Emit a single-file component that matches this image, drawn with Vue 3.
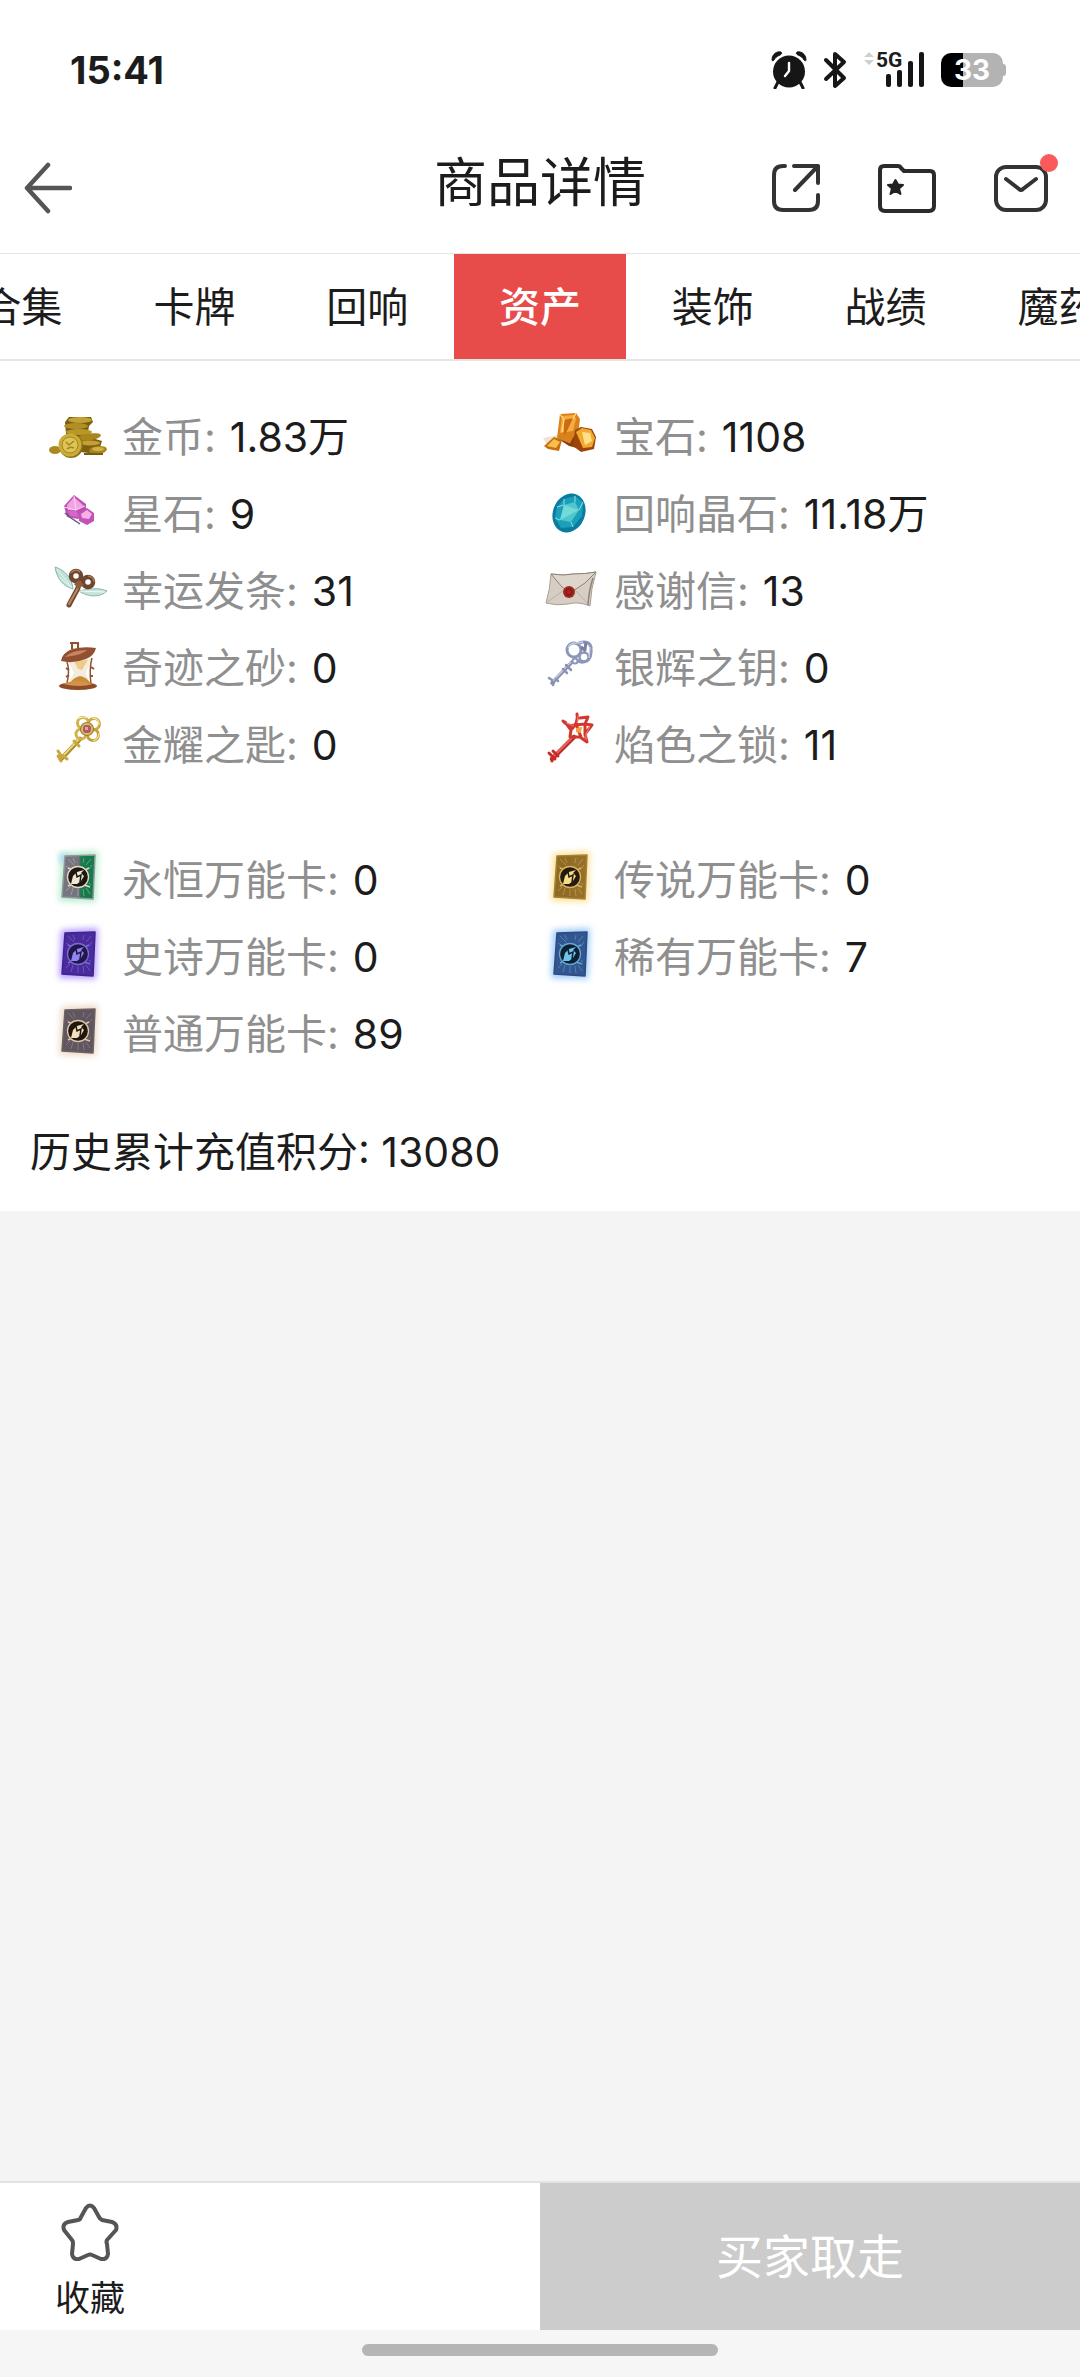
<template>
  <div class="page">
    <div class="status-bar">
      <span class="status-time">15:41</span>
      <div class="status-icons">
        <svg class="icon-alarm" viewBox="0 0 36 38" width="36" height="38">
          <path d="M7 31 L4 37 M29 31 L32 37" stroke="#161616" stroke-width="3" stroke-linecap="round" fill="none" />
          <circle cx="18" cy="20.500" r="16" fill="#161616" />
          <path d="M1 9 C1 3 6 0 10 1 C11 2 11 3 9 4 C6 5 4 7 3 9 C2 10 1 10 1 9 Z M35 9 C35 3 30 0 26 1 C25 2 25 3 27 4 C30 5 32 7 33 9 C34 10 35 10 35 9 Z" fill="#161616" stroke="#161616" stroke-width="1" />
          <path d="M18 12 V20 L14 25" stroke="#fff" stroke-width="2.400" stroke-linecap="round" stroke-linejoin="round" fill="none" />
        </svg>
        <svg class="icon-bluetooth" viewBox="0 0 24 38" width="24" height="38">
          <path d="M3 9 L21 27 L12 35 V3 L21 11 L3 28" stroke="#161616" stroke-width="4" stroke-linejoin="round" stroke-linecap="round" fill="none" />
        </svg>
        <div class="signal">
          <svg viewBox="0 0 62 38" width="62" height="38">
            <path d="M1 6 L6 1 L11 6 Z M1 9 L6 14 L11 9 Z" fill="#cfcfcf" />
            <rect x="23" y="23" width="5" height="13" rx="2" fill="#161616" />
            <rect x="34" y="19" width="5" height="17" rx="2" fill="#161616" />
            <rect x="45" y="10" width="5" height="26" rx="2" fill="#161616" />
            <rect x="56" y="1" width="5" height="35" rx="2" fill="#161616" />
          </svg>
          <span class="signal-type">5G</span>
        </div>
        <div class="battery">
          <span class="battery-level">33</span>
        </div>
      </div>
    </div>

    <header class="header">
      <button type="button" class="icon-btn back-btn" aria-label="返回">
        <svg viewBox="0 0 48 52" width="48" height="52">
          <path d="M24 3 L3 26 L24 49 M3 26 H46" stroke="#555" stroke-width="4.500" stroke-linecap="round" stroke-linejoin="round" fill="none" />
        </svg>
      </button>
      <h1 class="title">商品详情</h1>
      <div class="header-actions">
        <button type="button" class="icon-btn" aria-label="分享">
          <svg viewBox="0 0 48 48" width="48" height="48">
            <path d="M13 2 H11 Q2 2 2 11 V37 Q2 46 11 46 H37 Q46 46 46 37 V31" stroke="#333" stroke-width="4" stroke-linecap="round" fill="none" />
            <path d="M22 2 H46 V19 M46 2 L23 26" stroke="#333" stroke-width="4" stroke-linecap="round" stroke-linejoin="round" fill="none" />
          </svg>
        </button>
        <button type="button" class="icon-btn" aria-label="收藏夹">
          <svg viewBox="0 0 58 49" width="58" height="49">
            <path d="M6 2 H20 Q22 2 23 4 L26 7 H52 Q56 7 56 11 V42 Q56 47 51 47 H7 Q2 47 2 42 V6 Q2 2 6 2 Z" stroke="#2b2b2b" stroke-width="4" stroke-linejoin="round" fill="none" />
            <path d="M17.500 16 L20 20.500 L25 21 L21 24.500 L22.500 30 L17.500 27 L12.500 30 L14 24.500 L10 21 L15 20.500 Z" fill="#222" stroke="#222" stroke-width="2" stroke-linejoin="round" />
          </svg>
        </button>
        <button type="button" class="icon-btn mail-btn" aria-label="消息">
          <svg viewBox="0 0 54 47" width="54" height="47">
            <rect x="2" y="2" width="50" height="43" rx="10" stroke="#333" stroke-width="4" fill="none" />
            <path d="M12 14 L25 24 Q27 26 29 24 L42 14" stroke="#333" stroke-width="4" stroke-linecap="round" fill="none" />
          </svg>
          <span class="dot"></span>
        </button>
      </div>
    </header>

    <nav class="tabs">
      <button
        v-for="tab in tabs"
        :key="tab"
        type="button"
        class="tab"
        :class="{ active: tab === activeTab }"
        @click="activeTab = tab"
      >{{ tab }}</button>
    </nav>

    <section class="panel">
      <ul class="asset-list">
        <li v-for="item in assets" :key="item.name" class="asset">
          <svg class="asset-icon" viewBox="0 0 60 70" width="60" height="70">
            <g v-if="item.icon === 'coins'">
              <path d="M34 33 L54 39 L50 52 L32 50 Z" fill="#7d5f14" />
              <ellipse cx="7" cy="48" rx="6" ry="4" fill="#a98a20" />
              <path d="M17 20 L21 15 L43 15 L45 20 L41 24 L40 30 L34 36 L18 32 Z" fill="#7d5f10" />
              <ellipse cx="32" cy="18" rx="12" ry="3" fill="#c2a236" />
              <ellipse cx="28" cy="24" rx="12" ry="3" fill="#b08f26" />
              <ellipse cx="31" cy="30" rx="13" ry="3" fill="#b99829" />
              <ellipse cx="41" cy="35" rx="12" ry="3.500" transform="rotate(-8 41 35)" fill="#aa871d" />
              <ellipse cx="42" cy="41" rx="10" ry="2.500" fill="#c2a035" />
              <ellipse cx="50" cy="48" rx="9" ry="4" transform="rotate(-6 50 48)" fill="#a8861a" />
              <ellipse cx="50" cy="47" rx="6" ry="2" fill="#d0b244" />
              <path d="M36 52 H55" stroke="#7a5a10" stroke-width="2" />
              <circle cx="23" cy="44" r="12" fill="#8d6f14" />
              <circle cx="22" cy="43" r="11.500" fill="#c9ad38" />
              <circle cx="22" cy="43" r="8" fill="#dcc556" stroke="#a5851e" stroke-width="1" />
              <path d="M18 40 L21 43 L26 39 M19 47 Q22 44 26 46" stroke="#a5851e" stroke-width="1.500" fill="none" />
            </g>
            <g v-else-if="item.icon === 'gems'">
              <path d="M3 36 L18 33 L20 41 L8 44 Z" fill="#ead7bd" opacity="0.7" />
              <path d="M20 12 L36 11 L40 17 L38 33 L30 41 L17 36 Z" fill="#d9811b" />
              <path d="M22 14 L34 13 L36 17 L33 29 L20 31 Z" fill="#f4ad3e" />
              <path d="M24 18 L33 16 L28 27 L24 34 Z" fill="#cc6a14" />
              <path d="M20 12 L24 18 L22 30 M36 11 L33 17" stroke="#ffd98a" stroke-width="1.300" fill="none" />
              <path d="M17 36 L30 41 L34 34 L37 46 L29 44 Z" fill="#8f3f0a" />
              <path d="M35 28 L41 25 L52 27 L56 35 L54 47 L41 50 L33 44 Z" fill="#9c450b" />
              <path d="M36 30 L42 26 L51 28 L55 36 L52 45 L43 46 Z" fill="#f3a931" />
              <path d="M42 30 L50 31 L52 39 L45 43 Z" fill="#ffe089" />
              <path d="M4 44 L14 35 L22 38 L19 49 L8 47 Z" fill="#c66d13" />
              <path d="M7 44 L14 37 L20 40 L16 46 Z" fill="#f8c04b" />
            </g>
            <g v-else-if="item.icon === 'star'">
              <path d="M16 27 L26 16 L38 25 L38 34 L30 40 L19 38 Z" fill="#bd4fb5" />
              <path d="M19 26 L26 18 L36 27 L28 31 L20 31 Z" fill="#f3a3e2" />
              <path d="M20 32 L28 31 L31 38 L22 37 Z" fill="#d767c7" />
              <path d="M26 17 L28 31 L37 27 M16 28 L28 31" stroke="#fbd4f4" stroke-width="1" fill="none" />
              <path d="M17 34 L23 39 L32 45" stroke="#665084" stroke-width="1.500" fill="none" />
              <path d="M31 34 L39 29 L46 34 L46 42 L39 46 L31 42 Z" fill="#c252b5" />
              <path d="M33 35 L39 31 L44 35 L41 40 L34 39 Z" fill="#f6b0e7" />
            </g>
            <g v-else-if="item.icon === 'echo'">
              <ellipse cx="29" cy="34" rx="16" ry="20" transform="rotate(22 29 34)" fill="#087da0" />
              <path d="M24 20 L35 17 L43 23 L42 37 L33 48 L21 49 L15 39 L17 28 Z" fill="#1c9fba" />
              <path d="M24 26 L35 23 L39 31 L31 43 L20 41 Z" fill="#4ec6cb" />
              <path d="M24 26 L39 31 L20 41 Z" fill="#72dad8" />
              <path d="M24 20 L24 26 L17 28 M35 17 L35 23 M43 23 L39 31 M31 43 L33 48 M20 41 L15 39" stroke="#8edfe2" stroke-width="1" fill="none" />
            </g>
            <g v-else-if="item.icon === 'wings'">
              <path d="M7 11 C17 14 24 22 25 33 C15 30 9 23 7 11 Z" fill="#bfe0d8" stroke="#8bb5ad" stroke-width="1" />
              <path d="M9 13 L24 32 M11 21 L23 31" stroke="#e9f8f4" stroke-width="1" />
              <path d="M31 35 C41 33 50 31 59 35 C52 42 39 41 31 35 Z" fill="#c6e4dc" stroke="#8bb5ad" stroke-width="1" />
              <path d="M31 35 L57 36" stroke="#f1fbf8" stroke-width="1" />
              <path d="M30 32 L21 49" stroke="#704a32" stroke-width="5" stroke-linecap="round" />
              <path d="M30 32 L21 48" stroke="#b78b62" stroke-width="2" stroke-linecap="round" />
              <circle cx="28" cy="20" r="5" fill="none" stroke="#70462f" stroke-width="4.500" />
              <circle cx="40" cy="26" r="5" fill="none" stroke="#70462f" stroke-width="4.500" />
              <path d="M31 24 L36 29 L30 33 L26 28 Z" fill="#8d5d40" />
              <path d="M23 17 Q27 12 32 16 M40 20 Q46 21 46 26" stroke="#b0805d" stroke-width="1.200" fill="none" />
            </g>
            <g v-else-if="item.icon === 'letter'">
              <path d="M11 18 Q24 20 33 18 Q46 18 56 16 Q51 32 50 50 Q38 45 28 48 Q17 50 6 47 Q10 34 11 18 Z" fill="#d6cec4" stroke="#a89d92" stroke-width="1" />
              <path d="M6 47 L24 34 M50 50 L35 34" stroke="#bbb1a6" stroke-width="1" />
              <path d="M11 18 Q24 20 33 18 Q46 18 56 16 L45 27 L36 33 L29 36 L22 31 Z" fill="#ded6cc" stroke="#8d8277" stroke-width="1" />
              <path d="M53 22 Q49 34 48 49" stroke="#8f8376" stroke-width="1.500" fill="none" />
              <circle cx="29" cy="36" r="6" fill="#a52620" />
              <circle cx="29" cy="36" r="3" fill="none" stroke="#7f1c16" stroke-width="1.300" />
            </g>
            <g v-else-if="item.icon === 'hourglass'">
              <path d="M20 27 L44 25 L38 40 L42 52 H19 L26 40 Z" fill="#f4ecdc" />
              <path d="M26 28 L40 27 L34 37 L30 36 Z" fill="#eecb8d" />
              <path d="M21 51 Q26 44 32 43 Q39 44 43 51 Z" fill="#c98a3a" />
              <path d="M19 29 Q22 38 19 50 M44 25 Q41 36 43 51" stroke="#96532f" stroke-width="1.500" fill="none" />
              <path d="M18 35 L21 37 M43 34 L46 36 M18 44 L21 42 M43 43 L45 43" stroke="#96532f" stroke-width="2" />
              <path d="M24 16 V10 H30 V15 M22 10 H27" stroke="#94502d" stroke-width="2" fill="none" />
              <path d="M13 28 Q14 20 24 16 Q36 13 48 15 Q46 23 38 26 Q25 31 13 28 Z" fill="#91502f" />
              <path d="M17 24 Q24 17 39 17 Q35 22 17 24 Z" fill="#c98560" />
              <ellipse cx="30" cy="53" rx="19" ry="4" fill="#8e4b29" />
              <path d="M15 51 Q30 45 45 51 Q32 55 15 51 Z" fill="#d3934a" />
            </g>
            <g v-else-if="item.icon === 'silver'">
              <path d="M32 29 L12 50" stroke="#848dac" stroke-width="3.500" stroke-linecap="round" />
              <path d="M31 29 L13 48" stroke="#c4cbe0" stroke-width="1.500" />
              <path d="M26 32 L31 37 M23 36 L27 40 M9 45 L12 47 M14 49 L13 52 M16 46 L18 48" stroke="#8b94b4" stroke-width="2.500" stroke-linecap="round" />
              <circle cx="34" cy="17" r="7" fill="none" stroke="#8c96b8" stroke-width="3" />
              <path d="M39 10 Q49 7 51 14 Q52 25 47 28 Q41 31 37 27" fill="none" stroke="#8c96b8" stroke-width="3" />
              <circle cx="44" cy="24" r="4.500" fill="none" stroke="#8c96b8" stroke-width="2.500" />
              <path d="M41 14 L46 18 M46 9 L45 16" stroke="#7681a6" stroke-width="3" />
              <circle cx="35" cy="28" r="2.500" fill="#fff" stroke="#8c96b8" stroke-width="2" />
              <path d="M28 15 Q30 10 36 10 L43 9 M50 14 L49 25" stroke="#c9d0e5" stroke-width="1.300" fill="none" />
            </g>
            <g v-else-if="item.icon === 'gold'">
              <path d="M32 29 L13 49" stroke="#a88a2e" stroke-width="4.500" stroke-linecap="round" />
              <path d="M31 29 L13 48" stroke="#edd67b" stroke-width="2" />
              <path d="M26 31 L31 36 M10 41 L14 47 M15 46 L19 49 M10 46 L13 51" stroke="#c7a73e" stroke-width="3" stroke-linecap="round" />
              <circle cx="35" cy="13" r="5.500" fill="none" stroke="#d0b14a" stroke-width="3" />
              <circle cx="46" cy="14" r="5.500" fill="none" stroke="#c9a940" stroke-width="3" />
              <circle cx="45" cy="25" r="5.500" fill="none" stroke="#c2a038" stroke-width="3" />
              <circle cx="33" cy="24" r="5" fill="none" stroke="#d0b14a" stroke-width="3" />
              <path d="M30 9 Q34 6 39 8 M44 8 Q51 8 51 15 M51 23 Q51 29 45 31" stroke="#f3e39c" stroke-width="1.300" fill="none" />
              <circle cx="39" cy="19" r="6.500" fill="#dcc163" stroke="#9d7d28" stroke-width="1.200" />
              <rect x="35" y="15" width="8" height="8" rx="3" fill="#b0596a" />
              <rect x="37" y="17" width="3" height="3" fill="#e2a0a8" />
            </g>
            <g v-else-if="item.icon === 'flame'">
              <path d="M34 27 L12 49" stroke="#b32a26" stroke-width="4.500" stroke-linecap="round" />
              <path d="M33 27 L13 47" stroke="#ef6355" stroke-width="2" />
              <path d="M9 43 L15 49 M13 41 L18 46 M12 48 L12 51" stroke="#c62d28" stroke-width="3" stroke-linecap="round" />
              <path d="M23 11 Q28 17 35 15 Q38 10 37 4 M25 12 L31 20 L30 27 L40 27 L47 32 L45 24 L52 15 M40 8 L48 7 L45 14 L52 15 M35 15 L45 14 L45 25 M31 20 L36 14 L41 27" stroke="#d3362f" stroke-width="3" stroke-linecap="round" stroke-linejoin="round" fill="none" />
              <path d="M38 6 L37 13 M26 13 L34 16 M50 16 L46 24 L46 30" stroke="#f68172" stroke-width="1" fill="none" />
              <path d="M36 18 L42 17 L41 23 L36 22 Z" fill="#f2a33e" />
            </g>
          </svg>
          <span class="asset-name">{{ item.name }}:</span>
          <span class="asset-value">{{ item.value }}</span>
        </li>
      </ul>

      <ul class="asset-list card-list">
        <li v-for="card in cards" :key="card.name" class="asset">
          <svg class="asset-icon" viewBox="0 0 60 70" width="60" height="70">
            <defs>
              <filter :id="'glow-' + card.id" x="-50%" y="-50%" width="200%" height="200%">
                <feGaussianBlur stdDeviation="3" />
              </filter>
              <linearGradient :id="'face-' + card.id" x1="0" y1="0" x2="1" y2="0">
                <stop offset="0.5" :stop-color="card.left" />
                <stop offset="0.58" :stop-color="card.right" />
              </linearGradient>
            </defs>
            <path d="M13 8 L50 6 L48 57 L11 56 Z" :fill="card.glow" :filter="'url(#glow-' + card.id + ')'" />
            <path v-if="card.id === 'eternal'" d="M11 8 L24 12 L14 20 Z" fill="#a9cdf5" :filter="'url(#glow-' + card.id + ')'" />
            <path d="M17 11 L47 10 L45 54 L14 52 Z" :fill="'url(#face-' + card.id + ')'" stroke-width="1.500" stroke-linejoin="round" :stroke="card.edge" />
            <path
              d="M20 14 L26 20 M25 13 L27 18 M36 13 L35 18 M43 14 L38 20 M44 20 L41 24 M18 21 L22 24 M18 46 L22 42 M23 50 L25 43 M30 51 V44 M36 51 L35 44 M42 49 L38 43 M43 40 L41 38"
              :stroke="card.line"
              stroke-width="1"
              opacity="0.45"
            />
            <path d="M20 23 L25 25 M42 42 L36 40 M20 41 L24 39 M41 23 L37 25" :stroke="card.ring" stroke-width="1.500" />
            <circle cx="30" cy="32" r="10.500" :fill="card.dark" :stroke="card.ring" stroke-width="1.300" />
            <path d="M23 39 L25 31 L29 27 L36 25 L33 28 L36 31 L33 36 L29 39 Z" :fill="card.emblem" />
            <path d="M28 27 L29 32 L33 30 L32 37" :stroke="card.dark" stroke-width="1.500" fill="none" />
          </svg>
          <span class="asset-name">{{ card.name }}:</span>
          <span class="asset-value">{{ card.value }}</span>
        </li>
      </ul>

      <p class="total">历史累计充值积分: 13080</p>
    </section>

    <footer class="footer">
      <div class="footer-left">
        <button type="button" class="favorite">
          <svg viewBox="0 0 58 58" width="58" height="58">
            <path
              d="M25 5 Q29 0 33 5 L38 14 Q39 16 41 17 L51 19 Q57 21 55 27 L46 37 Q45 39 46 41 L47 51 Q46 57 40 56 L31 52 Q29 51 27 52 L18 56 Q12 57 11 51 L12 41 Q12 38 11 37 L3 27 Q1 21 7 19 L17 17 Q19 17 20 14 Z"
              stroke="#555"
              stroke-width="4"
              stroke-linejoin="round"
              fill="none"
            />
          </svg>
          <span>收藏</span>
        </button>
      </div>
      <button type="button" class="take-btn" disabled>买家取走</button>
    </footer>
    <div class="home-area">
      <div class="home-bar"></div>
    </div>
  </div>
</template>

<script setup>
import { ref } from 'vue'

const tabs = ['合集', '卡牌', '回响', '资产', '装饰', '战绩', '魔药']
const activeTab = ref('资产')

const assets = [
  { icon: 'coins', name: '金币', value: '1.83万' },
  { icon: 'gems', name: '宝石', value: '1108' },
  { icon: 'star', name: '星石', value: '9' },
  { icon: 'echo', name: '回响晶石', value: '11.18万' },
  { icon: 'wings', name: '幸运发条', value: '31' },
  { icon: 'letter', name: '感谢信', value: '13' },
  { icon: 'hourglass', name: '奇迹之砂', value: '0' },
  { icon: 'silver', name: '银辉之钥', value: '0' },
  { icon: 'gold', name: '金耀之匙', value: '0' },
  { icon: 'flame', name: '焰色之锁', value: '11' },
]

const cards = [
  { id: 'eternal', name: '永恒万能卡', value: '0', left: '#77737f', right: '#18794c', edge: '#8d9b9c', glow: '#b5ecce', line: '#b6d8c4', dark: '#1d1712', ring: '#e4d9c0', emblem: '#f1e8d2' },
  { id: 'legend', name: '传说万能卡', value: '0', left: '#8f6a25', right: '#96702a', edge: '#a9822f', glow: '#fbe29b', line: '#e0be6c', dark: '#241a0e', ring: '#d6b45c', emblem: '#f6dc84' },
  { id: 'epic', name: '史诗万能卡', value: '0', left: '#4a2b9c', right: '#4a2b9c', edge: '#3f2390', glow: '#b79cff', line: '#9b7de8', dark: '#20184a', ring: '#7f6ad0', emblem: '#8f86f0' },
  { id: 'rare', name: '稀有万能卡', value: '7', left: '#32568f', right: '#32568f', edge: '#2d4c80', glow: '#9ccbfb', line: '#7fb0e6', dark: '#0f1f33', ring: '#62a9cc', emblem: '#6cc4e8' },
  { id: 'common', name: '普通万能卡', value: '89', left: '#5f5660', right: '#5f5660', edge: '#6d6261', glow: '#ecd9c8', line: '#a99ba6', dark: '#20160f', ring: '#dcc6a4', emblem: '#f3dfbd' },
]
</script>

<style>
body {
  background: #f4f4f4;
}
</style>

<style scoped>
.page {
  display: flex;
  flex-direction: column;
  min-height: 100vh;
  background: #f4f4f4;
  color: #1c1c1c;
  font-family: Inter, "Noto Sans CJK SC", sans-serif;
  font-size: 41px;
  line-height: 60px;
}

button {
  padding: 0;
  border: none;
  background: none;
  color: inherit;
  font: inherit;
  cursor: pointer;
}

svg {
  display: block;
}

/* 状态栏 */
.status-bar {
  display: flex;
  align-items: center;
  justify-content: space-between;
  height: 140px;
  box-sizing: border-box;
  padding: 0 77px 0 70px;
  background: #fff;
}

.status-time {
  font-size: 38px;
  font-weight: 700;
}

.status-icons {
  display: flex;
  align-items: center;
  gap: 16px;
}

.signal {
  position: relative;
}

.signal-type {
  position: absolute;
  top: -1px;
  left: 13px;
  font-family: Roboto, sans-serif;
  font-size: 21px;
  line-height: 20px;
  font-weight: 700;
}

.battery {
  position: relative;
  width: 62px;
  height: 34px;
  border-radius: 10px;
  background: linear-gradient(90deg, #000 35%, #b3b3b3 35%);
  color: #fff;
  text-align: center;
}

.battery::after {
  content: "";
  position: absolute;
  top: 11px;
  right: -3px;
  width: 3px;
  height: 12px;
  border-radius: 0 3px 3px 0;
  background: #b3b3b3;
}

.battery-level {
  display: block;
  font-size: 28px;
  line-height: 34px;
  font-weight: 700;
}

/* 标题栏 */
.header {
  display: grid;
  grid-template-columns: 1fr auto 1fr;
  align-items: center;
  height: 96px;
  padding: 0 32px 17px;
  background: #fff;
}

.icon-btn {
  position: relative;
}

.back-btn {
  justify-self: start;
  margin-left: -8px;
}

.title {
  margin: 0;
  padding-bottom: 10px;
  font-size: 53px;
  line-height: 60px;
  font-weight: 400;
}

.header-actions {
  display: flex;
  align-items: center;
  justify-content: flex-end;
  gap: 58px;
}

.dot {
  position: absolute;
  top: -11px;
  right: -10px;
  width: 18px;
  height: 18px;
  border-radius: 50%;
  background: #fb5a5a;
}

/* 标签 */
.tabs {
  display: flex;
  justify-content: center;
  overflow: hidden;
  border-top: 1px solid #e4e4e4;
  border-bottom: 2px solid #e6e6e6;
  background: #fff;
}

.tab {
  flex: 0 0 16%;
  height: 105px;
}

.tab.active {
  background: #e74c4b;
  color: #fff;
  font-weight: 500;
}

/* 资产 */
.panel {
  padding: 37px 48px 29px;
  background: #fff;
}

.asset-list {
  display: grid;
  grid-template-columns: 1fr 1fr;
  margin: 0 0 58px;
  padding: 0;
  list-style: none;
}

.card-list {
  margin-bottom: 50px;
}

.asset {
  display: flex;
  align-items: center;
  height: 77px;
  white-space: nowrap;
}

.asset-icon {
  flex: none;
  margin-right: 14px;
}

.asset-name {
  margin-right: 14px;
  color: #8f8f8f;
}

.total {
  margin: 0 -18px;
}

/* 底部 */
.footer {
  display: flex;
  margin-top: auto;
  border-top: 2px solid #e3e3e3;
  background: #fff;
}

.footer-left {
  width: 50%;
  box-sizing: border-box;
  padding: 20px 0 0 55px;
}

.favorite {
  display: flex;
  flex-direction: column;
  align-items: center;
  gap: 12px;
  font-size: 35px;
  line-height: 50px;
}

.take-btn {
  width: 50%;
  height: 147px;
  background: #ccc;
  color: #fff;
  font-size: 47px;
}

.home-area {
  display: flex;
  justify-content: center;
  padding: 14px 0 21px;
  background: #f6f6f6;
}

.home-bar {
  width: 33%;
  height: 12px;
  border-radius: 6px;
  background: #b5b5b5;
}
</style>
